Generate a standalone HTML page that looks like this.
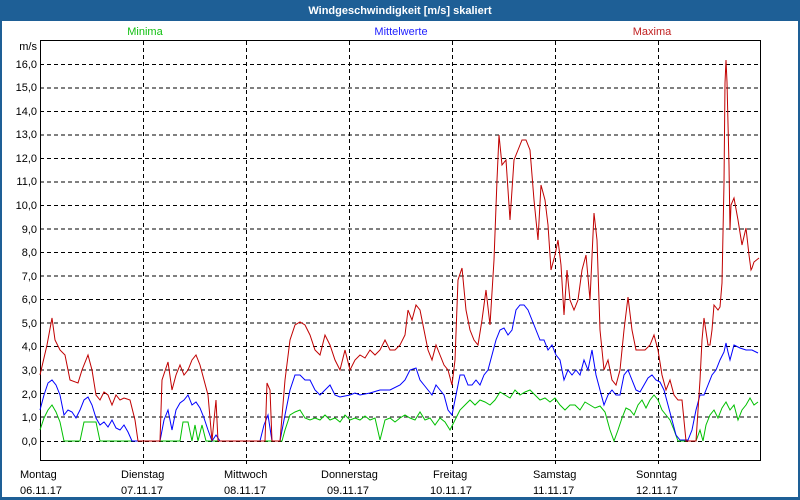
<!DOCTYPE html>
<html><head><meta charset="utf-8"><style>
html,body{margin:0;padding:0;background:#1e5f96;}
svg{display:block}
text{font-family:"Liberation Sans","DejaVu Sans",sans-serif;font-size:11px}
</style></head><body>
<svg width="800" height="500" xmlns="http://www.w3.org/2000/svg">
<rect x="0" y="0" width="800" height="500" fill="#1e5f96"/>
<rect x="2" y="21" width="796" height="476" fill="#fff"/>
<text x="400" y="14" text-anchor="middle" fill="#fff" font-weight="bold" style="font-size:11px">Windgeschwindigkeit [m/s] skaliert</text>
<text x="145" y="35" text-anchor="middle" fill="#10c010">Minima</text>
<text x="401" y="35" text-anchor="middle" fill="#2020ff">Mittelwerte</text>
<text x="652" y="35" text-anchor="middle" fill="#c02020">Maxima</text>
<text x="37" y="50" text-anchor="end">m/s</text>
<g text-anchor="end">
<text x="37" y="68">16,0</text><text x="37" y="91">15,0</text><text x="37" y="115">14,0</text><text x="37" y="138">13,0</text><text x="37" y="162">12,0</text><text x="37" y="185">11,0</text><text x="37" y="209">10,0</text><text x="37" y="233">9,0</text><text x="37" y="256">8,0</text><text x="37" y="280">7,0</text><text x="37" y="303">6,0</text><text x="37" y="327">5,0</text><text x="37" y="350">4,0</text><text x="37" y="374">3,0</text><text x="37" y="398">2,0</text><text x="37" y="421">1,0</text><text x="37" y="445">0,0</text>
</g>
<g stroke="#000" stroke-dasharray="4,3" stroke-width="1">
<path d="M40 64.5H760M40 88H760M40 111.5H760M40 135H760M40 158.5H760M40 182H760M40 205.5H760M40 229H760M40 252.5H760M40 276H760M40 299.5H760M40 323H760M40 346.5H760M40 370H760M40 393.5H760M40 417H760M40 441.5H760"/>
<path d="M143.5 41V464M246.5 41V464M349.5 41V464M452.5 41V464M555.5 41V464M658.5 41V464"/>
</g>
<rect x="40.5" y="40.5" width="720" height="420" fill="none" stroke="#000"/>
<polyline fill="none" stroke="#00c000" points="40,430 44,418 48,410 52,405 56,412 60,422 64,441 80,441 84,422 96,422 100,441 180,441 183,422 188,422 192,441 195,425 198,441 202,425 206,441 282,441 285,430 290,415 295,412 300,410 305,418 310,420 315,418 320,420 325,415 330,420 335,418 340,422 345,415 350,420 355,418 360,420 365,416 370,420 375,418 380,440 385,420 390,418 395,422 400,418 405,415 410,418 415,420 420,412 425,420 430,418 435,425 440,418 445,422 450,430 455,420 460,410 465,405 470,400 475,405 480,400 485,402 490,405 495,400 500,392 505,395 510,398 515,390 520,395 525,392 530,390 535,395 540,400 545,398 550,402 555,398 560,405 565,410 570,405 575,405 580,410 585,402 590,405 595,408 600,406 605,412 610,430 614,441 618,430 622,418 626,408 630,410 634,415 638,405 642,400 646,408 650,400 654,395 658,400 662,410 666,415 670,420 674,430 678,441 696,441 700,430 703,441 706,425 710,415 714,410 718,418 722,408 726,402 730,410 734,405 738,420 742,410 746,405 750,398 754,405 758,402"/>
<polyline fill="none" stroke="#0000ff" points="40,410 44,395 48,383 52,380 56,385 60,395 64,415 68,410 72,412 76,418 80,410 84,400 88,397 92,405 96,418 100,425 104,422 108,427 112,420 116,428 120,430 124,425 128,432 132,441 160,441 164,420 168,410 172,430 176,410 180,403 184,400 188,395 192,405 196,402 200,408 204,418 208,430 212,441 216,435 220,441 260,441 264,425 268,415 272,441 280,441 284,420 290,390 295,375 300,375 305,380 310,380 315,390 320,395 325,390 330,385 335,395 340,397 350,395 355,393 360,395 370,393 380,390 390,390 400,385 405,380 410,370 416,368 420,380 424,385 428,390 432,395 436,385 440,390 444,395 448,410 452,415 456,395 460,375 464,375 468,385 472,385 476,380 480,385 484,375 488,370 492,355 496,340 500,330 504,328 508,335 512,330 516,310 520,305 524,305 528,310 532,320 536,330 540,340 544,340 548,350 552,345 556,355 560,360 564,380 568,370 572,375 576,370 580,375 584,360 588,370 592,350 596,375 600,390 604,405 608,395 612,390 616,395 620,395 624,375 628,370 632,380 636,390 640,392 644,385 648,378 652,375 656,380 660,382 664,390 668,405 672,420 676,435 680,440 688,440 692,430 696,410 700,395 704,395 708,385 712,375 716,370 720,360 724,352 726,343 728,352 730,360 734,345 740,348 746,350 752,350 758,353"/>
<polyline fill="none" stroke="#c00000" points="40,375 47,345 52,318 55,340 60,350 65,355 70,380 78,383 82,370 88,355 92,370 96,395 100,400 104,392 108,395 112,405 116,395 120,400 124,398 130,400 135,420 138,441 160,441 162,380 168,362 172,390 176,375 180,365 184,375 188,370 192,360 196,355 200,365 204,380 208,395 212,441 214,420 216,400 218,441 265,441 267,383 270,390 272,441 280,441 285,380 290,340 295,325 300,322 305,325 310,335 315,350 320,355 325,335 330,345 335,360 340,370 345,350 350,370 355,360 360,355 365,358 370,350 375,355 380,350 385,340 390,350 395,350 400,345 405,335 408,310 412,320 416,305 420,310 424,330 428,350 432,360 436,345 440,355 444,365 448,370 452,385 455,360 458,280 462,268 466,310 470,330 474,340 478,345 482,320 486,290 490,325 494,260 497,180 499,135 502,165 506,160 510,220 514,160 518,150 522,140 526,140 530,150 534,200 538,240 541,185 545,200 548,225 551,270 555,255 558,240 561,265 564,315 567,270 570,300 574,310 578,300 582,270 586,255 590,300 594,213 597,240 600,330 604,370 608,360 612,380 616,385 620,370 624,330 628,297 632,330 636,350 640,350 645,350 650,345 654,335 658,350 662,375 666,390 670,380 674,395 678,400 682,400 686,441 696,441 700,380 702,340 704,318 708,345 710,345 712,330 714,305 718,310 720,307 722,283 723,233 724,183 725,83 726,60 727,82 729,165 730,230 731,205 734,198 738,220 742,245 746,228 749,255 751,270 752,268 754,262 759,258"/>
<g fill="#000">
<text x="20" y="478">Montag</text><text x="20" y="494">06.11.17</text>
<text x="121" y="478">Dienstag</text><text x="121" y="494">07.11.17</text>
<text x="224" y="478">Mittwoch</text><text x="224" y="494">08.11.17</text>
<text x="321" y="478">Donnerstag</text><text x="327" y="494">09.11.17</text>
<text x="433" y="478">Freitag</text><text x="430" y="494">10.11.17</text>
<text x="533" y="478">Samstag</text><text x="533" y="494">11.11.17</text>
<text x="636" y="478">Sonntag</text><text x="636" y="494">12.11.17</text>
</g>
</svg>
</body></html>
